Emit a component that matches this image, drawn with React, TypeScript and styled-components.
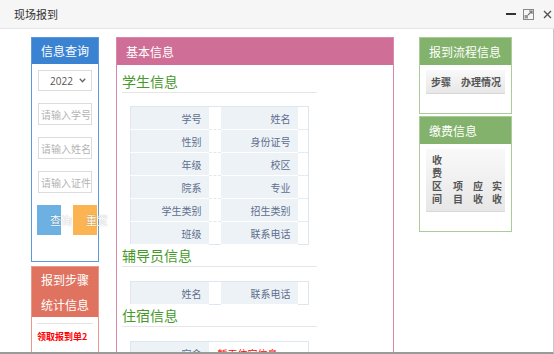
import React from 'react'
import styled, { createGlobalStyle } from 'styled-components'

const GlobalStyle = createGlobalStyle`
  html, body { margin: 0; padding: 0; background: #fff; }
  body { font-family: "Noto Sans CJK SC", "Noto Sans", sans-serif; }
  * { box-sizing: border-box; }
`

const Window = styled.div`
  width: 554px;
  height: 354px;
  overflow: hidden;
  display: flex;
  flex-direction: column;
  background: #fff;
`

const TitleBar = styled.div`
  height: 29px;
  flex: none;
  display: flex;
  align-items: center;
  padding: 0 2px 0 14px;
  background: #f6f6f6;
  border-bottom: 1px solid #e4e4e4;
  font-size: 11px;
  color: #333;
`

const Title = styled.span`
  flex: 1;
`

const TitleTools = styled.div`
  display: flex;
  align-items: center;
  gap: 7px;
  svg { display: block; }
`

const Content = styled.div`
  flex: 1;
  display: flex;
  align-items: flex-start;
  padding: 8px 0 0 31px;
  border-right: 1px solid #c8c8c8;
  border-bottom: 2px solid #9a9a9a;
  overflow: hidden;
`

const Column = styled.div<{ $width: number; $gap?: number; $mr?: number }>`
  width: ${(p) => p.$width}px;
  flex: none;
  display: flex;
  flex-direction: column;
  gap: ${(p) => p.$gap || 0}px;
  margin-right: ${(p) => p.$mr || 0}px;
`

const Panel = styled.section<{ $border: string; $minH?: number }>`
  border: 1px solid ${(p) => p.$border};
  background: #fff;
  min-height: ${(p) => (p.$minH ? p.$minH + 'px' : 'auto')};
`

const PanelHead = styled.div<{ $bg: string; $center?: boolean; $h?: number }>`
  background: ${(p) => p.$bg};
  color: #fff;
  font-size: 12px;
  height: ${(p) => p.$h || 27}px;
  line-height: ${(p) => p.$h || 27}px;
  padding: 0 9px;
  text-align: ${(p) => (p.$center ? 'center' : 'left')};
  white-space: nowrap;
`

const StatsHead = styled(PanelHead)`
  height: 50px;
  line-height: 25px;
  white-space: normal;
  padding: 0 8px;
`

const QueryBody = styled.div`
  display: flex;
  flex-direction: column;
  gap: 12px;
  padding: 6px 0 26px 6px;
`

const FakeSelect = styled.div`
  width: 54px;
  height: 21px;
  border: 1px solid #dcdcdc;
  display: flex;
  align-items: center;
  justify-content: space-between;
  padding: 0 5px 0 11px;
  font-size: 10px;
  color: #555;
  font-family: "Open Sans", "Noto Sans", sans-serif;
`

const TextInput = styled.input`
  width: 54px;
  height: 22px;
  border: 1px solid #dcdcdc;
  padding: 0 0 0 2px;
  font-size: 10px;
  font-family: "Noto Sans CJK SC", sans-serif;
  outline: none;
  &::placeholder { color: #b4b4b4; }
`

const ButtonRow = styled.div`
  display: flex;
  gap: 12px;
  margin-left: -1px;
`

const ActionButton = styled.button<{ $bg: string }>`
  width: 24px;
  height: 30px;
  border: none;
  padding: 0 0 0 13px;
  background: ${(p) => p.$bg};
  color: #fff;
  font-size: 11px;
  font-family: "Noto Sans CJK SC", sans-serif;
  text-align: left;
  white-space: nowrap;
  overflow: visible;
  text-shadow: 0 0 1px rgba(0, 0, 0, 0.35);
  cursor: pointer;
`

const StatsBody = styled.div`
  padding: 6px 5px 0;
  min-height: 60px;
`

const Divider = styled.div`
  height: 1px;
  background: #e4e4e4;
`

const StatLink = styled.div`
  margin-top: 6px;
  font-size: 9px;
  line-height: 14px;
  font-weight: bold;
  color: #f00;
`

const MidBody = styled.div`
  padding: 0 5px 20px;
`

const SectionTitle = styled.h3<{ $first?: boolean }>`
  margin: ${(p) => (p.$first ? 6 : 0)}px 0 0;
  width: 195px;
  height: 22px;
  line-height: 21px;
  font-size: 14px;
  font-weight: normal;
  color: #459a2a;
  border-bottom: 1px solid #e6e6e6;
`

const InfoTable = styled.table<{ $mt?: number }>`
  margin: ${(p) => p.$mt || 13}px 0 0 8px;
  width: 178px;
  border-collapse: collapse;
  table-layout: fixed;
  border: 1px solid #dde7f1;
  font-size: 10px;
`

const Row = styled.tr`
  height: 23px;
`

const LabelCell = styled.td`
  background: #edf2f6;
  color: #5d6e8e;
  text-align: right;
  padding: 0 7px 0 0;
  border-bottom: 1px solid #fff;
  white-space: nowrap;
`

const ValueCell = styled.td<{ $alert?: boolean }>`
  background: #fff;
  color: ${(p) => (p.$alert ? '#f00' : '#333')};
  padding: 0 0 0 9px;
  border-bottom: 1px dashed #e1e9f2;
  white-space: nowrap;
`

const SideBody = styled.div`
  padding: 5px 6px 19px;
`

const FlowTable = styled.table`
  width: 79px;
  border-collapse: collapse;
  table-layout: fixed;
`

const HeadCell = styled.th<{ $w: number }>`
  width: ${(p) => p.$w}px;
  height: 23px;
  padding: 0 0 0 5px;
  text-align: left;
  vertical-align: middle;
  font-size: 10px;
  font-weight: bold;
  color: #555;
  background: linear-gradient(#f9f9f9, #e7e7e7);
  border-bottom: 1px solid #d8d8d8;
  white-space: nowrap;
`

const FeeCell = styled(HeadCell)`
  height: 62px;
  padding: 4px 0 6px 6px;
  line-height: 13px;
  vertical-align: bottom;
  white-space: normal;
  word-break: break-all;
`

const studentRows: [string, string][] = [
  ['学号', '姓名'],
  ['性别', '身份证号'],
  ['年级', '校区'],
  ['院系', '专业'],
  ['学生类别', '招生类别'],
  ['班级', '联系电话'],
]

const Cols = () => (
  <colgroup>
    <col style={{ width: 78 }} />
    <col style={{ width: 12 }} />
    <col style={{ width: 77 }} />
    <col style={{ width: 11 }} />
  </colgroup>
)

export default function App() {
  return (
    <>
      <GlobalStyle />
      <Window>
        <TitleBar>
          <Title>现场报到</Title>
          <TitleTools>
            <svg width="10" height="10" viewBox="0 0 10 10">
              <rect x="0" y="4" width="10" height="2" fill="#333" />
            </svg>
            <svg width="11" height="11" viewBox="0 0 11 11">
              <rect x="0.5" y="0.5" width="10" height="10" fill="none" stroke="#888" />
              <rect x="1.5" y="6" width="3.5" height="3.5" fill="#999" />
              <path d="M5 6 L9 2 M6 2 H9 V5" fill="none" stroke="#777" strokeWidth="1.2" />
            </svg>
            <svg width="9" height="9" viewBox="0 0 9 9" style={{ marginLeft: 2 }}>
              <path d="M1 1 L8 8 M8 1 L1 8" stroke="#555" strokeWidth="1.4" />
            </svg>
          </TitleTools>
        </TitleBar>
        <Content>
          <Column $width={68} $gap={4} $mr={17}>
            <Panel $border="#5b98dc">
              <PanelHead $bg="#3a82d2" $center $h={26}>信息查询</PanelHead>
              <QueryBody>
                <FakeSelect>
                  <span>2022</span>
                  <svg width="7" height="5" viewBox="0 0 7 5">
                    <path d="M0.8 0.8 L3.5 3.8 L6.2 0.8" fill="none" stroke="#666" strokeWidth="1.3" />
                  </svg>
                </FakeSelect>
                <TextInput placeholder="请输入学号" />
                <TextInput placeholder="请输入姓名" />
                <TextInput placeholder="请输入证件号" />
                <ButtonRow>
                  <ActionButton $bg="#6cb1e2">查询</ActionButton>
                  <ActionButton $bg="#fbb451">重置</ActionButton>
                </ButtonRow>
              </QueryBody>
            </Panel>
            <Panel $border="#e8998a">
              <StatsHead $bg="#e0735f" $center>报到步骤统计信息</StatsHead>
              <StatsBody>
                <Divider />
                <StatLink>领取报到单2</StatLink>
              </StatsBody>
            </Panel>
          </Column>

          <Column $width={278} $mr={25}>
            <Panel $border="#d889ab" $minH={400}>
              <PanelHead $bg="#cf6f98">基本信息</PanelHead>
              <MidBody>
                <SectionTitle $first>学生信息</SectionTitle>
                <InfoTable>
                  <Cols />
                  <tbody>
                    {studentRows.map(([a, b]) => (
                      <Row key={a}>
                        <LabelCell>{a}</LabelCell>
                        <ValueCell />
                        <LabelCell>{b}</LabelCell>
                        <ValueCell />
                      </Row>
                    ))}
                  </tbody>
                </InfoTable>
                <SectionTitle>辅导员信息</SectionTitle>
                <InfoTable $mt={14}>
                  <Cols />
                  <tbody>
                    <Row>
                      <LabelCell>姓名</LabelCell>
                      <ValueCell />
                      <LabelCell>联系电话</LabelCell>
                      <ValueCell />
                    </Row>
                  </tbody>
                </InfoTable>
                <SectionTitle>住宿信息</SectionTitle>
                <InfoTable $mt={14}>
                  <Cols />
                  <tbody>
                    <Row>
                      <LabelCell>宿舍</LabelCell>
                      <ValueCell $alert colSpan={3}>暂无住宿信息</ValueCell>
                    </Row>
                  </tbody>
                </InfoTable>
              </MidBody>
            </Panel>
          </Column>

          <Column $width={93} $gap={2}>
            <Panel $border="#a9cc98">
              <PanelHead $bg="#82b26b">报到流程信息</PanelHead>
              <SideBody>
                <FlowTable>
                  <thead>
                    <tr>
                      <HeadCell $w={30}>步骤</HeadCell>
                      <HeadCell $w={49}>办理情况</HeadCell>
                    </tr>
                  </thead>
                </FlowTable>
              </SideBody>
            </Panel>
            <Panel $border="#a9cc98">
              <PanelHead $bg="#82b26b">缴费信息</PanelHead>
              <SideBody>
                <FlowTable>
                  <thead>
                    <tr>
                      <FeeCell $w={21}>收费区间</FeeCell>
                      <FeeCell $w={20}>项目</FeeCell>
                      <FeeCell $w={19}>应收</FeeCell>
                      <FeeCell $w={19}>实收</FeeCell>
                    </tr>
                  </thead>
                </FlowTable>
              </SideBody>
            </Panel>
          </Column>
        </Content>
      </Window>
    </>
  )
}
